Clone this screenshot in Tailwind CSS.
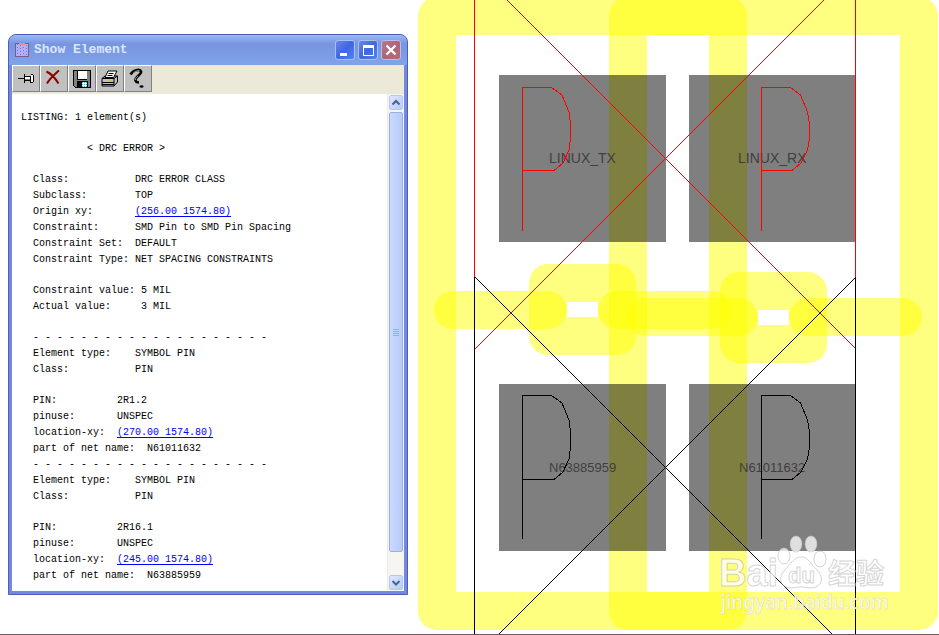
<!DOCTYPE html>
<html lang="en">
<head>
<meta charset="utf-8">
<meta name="viewport" content="width=device-width, initial-scale=1">
<title>Show Element</title>
<script src="https://cdn.jsdelivr.net/npm/@tailwindcss/browser@4"></script>
</head>
<body class="bg-white">
<main class="grid grid-cols-[410fr_529fr] items-start overflow-hidden border-b border-[#7b5563]">
  <section class="mt-[34px] mr-0.5 ml-2 flex flex-col rounded-t-lg border border-[#4c5cc0] bg-[#7488de] px-[3px] pb-[3px]" aria-label="Show Element">
    <header class="-mx-[3px] flex h-[30px] items-center gap-[3px] rounded-t-[7px] bg-linear-to-b from-[#9ab9f2] via-[#7794e0] via-30% to-[#80a4ea] pr-1.5 pl-1.5">
      <svg class="mr-0.5 size-[14px] shrink-0" viewBox="0 0 14 14" shape-rendering="crispEdges" aria-hidden="true">
        <rect width="14" height="14" fill="#b3aefa"/>
        <path d="M2.500 1v12M5.500 2v11M8.500 1v12M11.500 2v11" stroke="#7a74dc" stroke-dasharray="1 2"/>
        <path d="M.5 13.500V.5h13v13z" fill="none" stroke="#7b5c86"/>
        <path d="M4 1h6" stroke="#f08a8a" stroke-width="2"/>
      </svg>
      <h1 class="grow font-['Liberation_Mono',monospace] text-[13px] leading-4 font-bold text-[#dbe6fa]">Show Element</h1>
      <button type="button" aria-label="Minimize" class="size-[20px] rounded-[3px] border border-[#a9c0f2] bg-linear-to-br from-[#6a87e6] via-[#4066e0] to-[#4d86f0]">
        <svg viewBox="0 0 18 18" class="size-full" shape-rendering="crispEdges"><path d="M4 12h7v3H4z" fill="#fff"/></svg>
      </button>
      <button type="button" aria-label="Maximize" class="size-[20px] rounded-[3px] border border-[#a9c0f2] bg-linear-to-br from-[#6a87e6] via-[#4066e0] to-[#4d86f0]">
        <svg viewBox="0 0 18 18" class="size-full" shape-rendering="crispEdges"><path d="M4 4h11v11H4zM5 7v7h9V7z" fill="#fff" fill-rule="evenodd"/></svg>
      </button>
      <button type="button" aria-label="Close" class="size-[20px] rounded-[3px] border border-[#b9bfe8] bg-linear-to-br from-[#b8788c] via-[#ad6678] to-[#b86a72]">
        <svg viewBox="0 0 18 18" class="size-full"><path d="M4.500 4.500l9 9M13.500 4.500l-9 9" stroke="#fff" stroke-width="2.400"/></svg>
      </button>
    </header>
    <div class="flex h-[29px] items-start bg-[#ece9d8]" role="toolbar">
      <button type="button" aria-label="Pin" class="h-[27px] w-7 border border-t-white border-l-white border-r-[#808080] border-b-[#808080] bg-[#c0c0c0]">
        <svg viewBox="0 0 26 25" class="size-full" fill="none" stroke="#000" shape-rendering="crispEdges"><path d="M5 12.500h6M11.500 8v9M12 10.500h5M12 14.500h5"/><path d="M12 13.500h5" stroke="#808080"/><path d="M12 11h5v2h-5z" fill="#fff" stroke="none"/><path d="M17 10h1V9h2v8h-2v-1h-1z" fill="#fff" stroke="none"/><path d="M17.500 9.500v7M18 8.500h2M18 16.500h2M20.500 9v7"/></svg>
      </button>
      <button type="button" aria-label="Close listing" class="h-[27px] w-7 border border-t-white border-l-white border-r-[#808080] border-b-[#808080] bg-[#c0c0c0]">
        <svg viewBox="0 0 26 25" class="size-full" fill="none" stroke="#8b0000"><path d="M5.500 5.500c4 2 9 7 12 12M18 4.500C13 9 9 12 6 17.500" stroke-width="2"/></svg>
      </button>
      <button type="button" aria-label="Save" class="h-[27px] w-7 border border-t-white border-l-white border-r-[#808080] border-b-[#808080] bg-[#c0c0c0]">
        <svg viewBox="0 0 26 25" class="size-full" shape-rendering="crispEdges"><path d="M4 4h18v18H6l-2-2z"/><path d="M5 5h3v9h10V5h3v16H6l-1-1z" fill="#808080"/><path d="M9 5h9v8H9z" fill="#fff"/><path d="M8 15h11v6H8z" fill="#000"/><path d="M10 16h8v5h-8z" fill="#fff"/><path d="M10 16h3v5h-3z" fill="#111"/><path d="M13.500 16v5M15.500 16v5M17.500 16v5" stroke="#35b8c4" stroke-dasharray="1 1"/></svg>
      </button>
      <button type="button" aria-label="Print" class="h-[27px] w-7 border border-t-white border-l-white border-r-[#808080] border-b-[#808080] bg-[#c0c0c0]">
        <svg viewBox="0 0 26 25" class="size-full" stroke="#000" stroke-linejoin="round"><path d="M5 12.500L8 10h12.500v6L17 20H5z" fill="#c0c0c0"/><path d="M8 11.500L11 5h9l-3.500 6.500z" fill="#fff"/><path d="M11.500 7.500h5M10.500 9.500h5" /><path d="M5 12.500h12l3.500-2.500M17 12.500V20M5 16.500h12M5 18.500h12" fill="none"/><path d="M12 14.500h3" stroke="#d6c520"/></svg>
      </button>
      <button type="button" aria-label="Help" class="h-[27px] w-7 border border-t-white border-l-white border-r-[#808080] border-b-[#808080] bg-[#c0c0c0]">
        <svg viewBox="0 0 26 25" class="size-full" fill="none" stroke="#000"><path d="M5.500 8.500C8 4 15 2.500 16 5.500c1 3-6.500 5-5.500 9 .3 1.500 2 2 3.500 2" stroke-width="2.600"/><path d="M8 7.500c2-2 4-3 6.500-3M13 10c-1.500 1-3 2.500-2.500 4" stroke="#c0c0c0" stroke-width=".8"/><ellipse cx="16.500" cy="20.500" rx="2" ry="1.300" fill="#000" stroke="none"/></svg>
      </button>
    </div>
    <div class="flex bg-white">
      <div class="flex min-w-0 grow flex-col gap-[15px] pt-4 pb-[7px] pl-[9px] font-['Liberation_Mono','Noto_Sans_CJK_SC',monospace] text-[10px] leading-4 whitespace-nowrap text-black">
        <p>LISTING: 1 element(s)</p>
        <h2 class="pl-[66px]">&lt; DRC ERROR &gt;</h2>
        <dl class="grid grid-cols-[102px_auto] pl-3">
          <dt>Class:</dt><dd>DRC ERROR CLASS</dd>
          <dt>Subclass:</dt><dd>TOP</dd>
          <dt>Origin xy:</dt><dd><a href="#origin" class="text-[#0000ff] underline underline-offset-2">(256.00 1574.80)</a></dd>
          <dt>Constraint:</dt><dd>SMD Pin to SMD Pin Spacing</dd>
          <dt>Constraint Set:</dt><dd>DEFAULT</dd>
          <dt>Constraint Type:</dt><dd>NET SPACING CONSTRAINTS</dd>
        </dl>
        <dl class="grid grid-cols-[108px_auto] pl-3">
          <dt>Constraint value:</dt><dd>5 MIL</dd>
          <dt>Actual value:</dt><dd>3 MIL</dd>
        </dl>
        <div class="pl-3">
          <p>- - - - - - - - - - - - - - - - - - - -</p>
          <dl class="grid grid-cols-[102px_auto]">
            <dt>Element type:</dt><dd>SYMBOL PIN</dd>
            <dt>Class:</dt><dd>PIN</dd>
          </dl>
        </div>
        <div class="pl-3">
          <dl class="grid grid-cols-[84px_auto]">
            <dt>PIN:</dt><dd>2R1.2</dd>
            <dt>pinuse:</dt><dd>UNSPEC</dd>
            <dt>location-xy:</dt><dd><a href="#pin-2r1-2" class="text-[#0000ff] underline underline-offset-2">(270.00 1574.80)</a></dd>
          </dl>
          <p class="whitespace-pre">part of net name:  N61011632</p>
          <p>- - - - - - - - - - - - - - - - - - - -</p>
          <dl class="grid grid-cols-[102px_auto]">
            <dt>Element type:</dt><dd>SYMBOL PIN</dd>
            <dt>Class:</dt><dd>PIN</dd>
          </dl>
        </div>
        <div class="pl-3">
          <dl class="grid grid-cols-[84px_auto]">
            <dt>PIN:</dt><dd>2R16.1</dd>
            <dt>pinuse:</dt><dd>UNSPEC</dd>
            <dt>location-xy:</dt><dd><a href="#pin-2r16-1" class="text-[#0000ff] underline underline-offset-2">(245.00 1574.80)</a></dd>
          </dl>
          <p class="whitespace-pre">part of net name:  N63885959</p>
        </div>
      </div>
      <div class="flex w-[17px] shrink-0 flex-col gap-0.5 border-l border-[#eeede5] bg-[#f6f5f0] p-px">
        <button type="button" aria-label="Scroll up" class="h-[15px] rounded-xs border border-[#b5c8f5] bg-linear-to-br from-[#dfe8ff] to-[#b4ccfb]">
          <svg viewBox="0 0 12 13" class="size-full" fill="none" stroke="#4d6185" stroke-width="2"><path d="M2.500 8.500L6 5l3.500 3.500"/></svg>
        </button>
        <div class="mb-[21px] flex grow flex-col items-center justify-center gap-px rounded-xs border border-[#98b0e4] bg-linear-to-r from-[#cbdaff] to-[#b6cbfa]">
          <i class="h-px w-1.5 bg-[#8cb0f8]"></i><i class="h-px w-1.5 bg-[#8cb0f8]"></i><i class="h-px w-1.5 bg-[#8cb0f8]"></i><i class="h-px w-1.5 bg-[#8cb0f8]"></i>
        </div>
        <button type="button" aria-label="Scroll down" class="h-[15px] rounded-xs border border-[#b5c8f5] bg-linear-to-br from-[#dfe8ff] to-[#b4ccfb]">
          <svg viewBox="0 0 12 13" class="size-full" fill="none" stroke="#4d6185" stroke-width="2"><path d="M2.500 5L6 8.500 9.500 5"/></svg>
        </button>
      </div>
    </div>
  </section>

  <svg viewBox="410 0 529 634" class="block h-auto w-full" role="img" aria-label="Board layout with pin spacing error">
    <!-- keep-out outlines and DRC markers -->
    <g fill="none" stroke="#ffff00" stroke-opacity=".5" stroke-width="38" stroke-linejoin="round" stroke-linecap="round">
      <rect x="437" y="16" width="482" height="595"/>
      <rect x="628" y="16" width="100" height="595"/>
      <rect x="548" y="283" width="69" height="53"/>
      <rect x="739" y="291" width="69" height="53"/>
      <path d="M453 310h95"/>
      <path d="M617 310h95"/>
      <path d="M645 317h94"/>
      <path d="M808 317h95"/>
    </g>
    <!-- pads -->
    <g fill="#000" fill-opacity=".5">
      <rect x="499" y="75" width="167" height="167"/>
      <rect x="689" y="75" width="167" height="167"/>
      <rect x="499" y="384" width="167" height="167"/>
      <rect x="689" y="384" width="167" height="167"/>
    </g>
    <g fill="#404040" font-family="'Liberation Sans', Arial, sans-serif">
      <g font-size="14"><text x="549" y="163">LINUX_TX</text><text x="738" y="163">LINUX_RX</text></g>
      <g font-size="13"><text x="549" y="472">N63885959</text><text x="739" y="472">N61011632</text></g>
    </g>
    <!-- component outlines -->
    <g fill="none" shape-rendering="crispEdges">
      <g stroke="#ff0000">
        <path d="M474.500 0v277M855.500 0v277M507 0l348 348M824 0L475 349"/>
        <path d="M522.500 231V87.500h29l10.500 7.500 7 17 1.500 12v14l-1.500 12-6 13-9 7.500h-31"/>
        <path d="M761.500 231V87.500h29l10 7.500 7 17 2 12v14l-2 12-6.500 13-9 7.500h-30.500"/>
      </g>
      <g stroke="#000">
        <path d="M474.500 277v357M855.500 277v357M475 277l357 357M855 278L499 634"/>
        <path d="M522.500 539V395.500h29l10.500 7.500 7 17 1.500 12v15l-1.500 12-6 13-9 7.500h-31"/>
        <path d="M761.500 539V395.500h29l10 7.500 7 17 2 12v15l-2 12-6.500 13-9 7.500h-30.500"/>
      </g>
    </g>
    <!-- watermark -->
    <g fill="#fff" fill-opacity=".75" stroke="#b8b8b8" stroke-opacity=".6" stroke-width="1">
      <text x="719" y="586" font-family="'Liberation Sans', Arial, sans-serif" font-weight="700" font-size="38">Bai</text>
      <ellipse cx="784" cy="556" rx="6" ry="8"/>
      <ellipse cx="796" cy="544" rx="6" ry="8"/>
      <ellipse cx="811" cy="544" rx="6" ry="8"/>
      <ellipse cx="820" cy="559" rx="6" ry="8"/>
      <path d="M801 557c7 0 10 7 16 13 6 5 6 14-1 17-5 2-9 0-15 0s-10 2-15 0c-7-3-7-12-1-17 6-6 9-13 16-13z"/>
      <text x="788" y="583" font-family="'Liberation Sans', Arial, sans-serif" font-weight="700" font-size="22">du</text>
      <text x="828" y="584" font-family="'Noto Sans CJK SC', sans-serif" font-weight="700" font-size="28">经验</text>
      <text x="721" y="609" font-family="'Noto Sans', sans-serif" font-weight="500" font-size="19" stroke-opacity=".3" fill-opacity=".9">jingyan.baidu.com</text>
    </g>
  </svg>
</main>
</body>
</html>
